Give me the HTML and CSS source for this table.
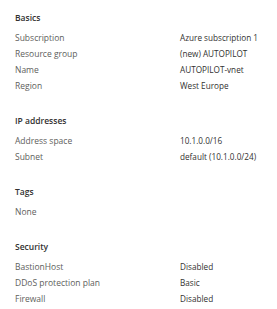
FILE: index.html
```html
<!DOCTYPE html>
<html>
<head>
<meta charset="utf-8">
<link rel="stylesheet" href="styles.css">
</head>
<body>
<div class="summary">
  <section class="section">
    <div class="heading">Basics</div>
    <div class="row"><span class="label">Subscription</span><span class="value">Azure subscription 1</span></div>
    <div class="row"><span class="label">Resource group</span><span class="value">(new) AUTOPILOT</span></div>
    <div class="row"><span class="label">Name</span><span class="value">AUTOPILOT-vnet</span></div>
    <div class="row"><span class="label">Region</span><span class="value">West Europe</span></div>
  </section>
  <section class="section">
    <div class="heading">IP addresses</div>
    <div class="row"><span class="label">Address space</span><span class="value">10.1.0.0/16</span></div>
    <div class="row"><span class="label">Subnet</span><span class="value">default (10.1.0.0/24)</span></div>
  </section>
  <section class="section">
    <div class="heading">Tags</div>
    <div class="row"><span class="label">None</span></div>
  </section>
  <section class="section">
    <div class="heading">Security</div>
    <div class="row"><span class="label">BastionHost</span><span class="value">Disabled</span></div>
    <div class="row"><span class="label">DDoS protection plan</span><span class="value">Basic</span></div>
    <div class="row"><span class="label">Firewall</span><span class="value">Disabled</span></div>
  </section>
</div>
</body>
</html>
```

FILE: styles.css
```css
html, body {
  margin: 0;
  padding: 0;
  background: #ffffff;
}
body {
  font-family: "Open Sans", "Noto Sans", sans-serif;
  font-size: 8.5px;
  color: #323130;
}
.summary {
  padding: 10px 0 0 15px;
  display: flex;
  flex-direction: column;
  gap: 19px;
}
.section {
  display: flex;
  flex-direction: column;
}
.heading {
  font-weight: 600;
  line-height: 16px;
  margin-bottom: 4px;
  color: #323130;
}
.row {
  display: grid;
  grid-template-columns: 165px 1fr;
  line-height: 16px;
}
.label {
  color: #605e5c;
}
.value {
  color: #323130;
  font-size: 8.2px;
}
```
